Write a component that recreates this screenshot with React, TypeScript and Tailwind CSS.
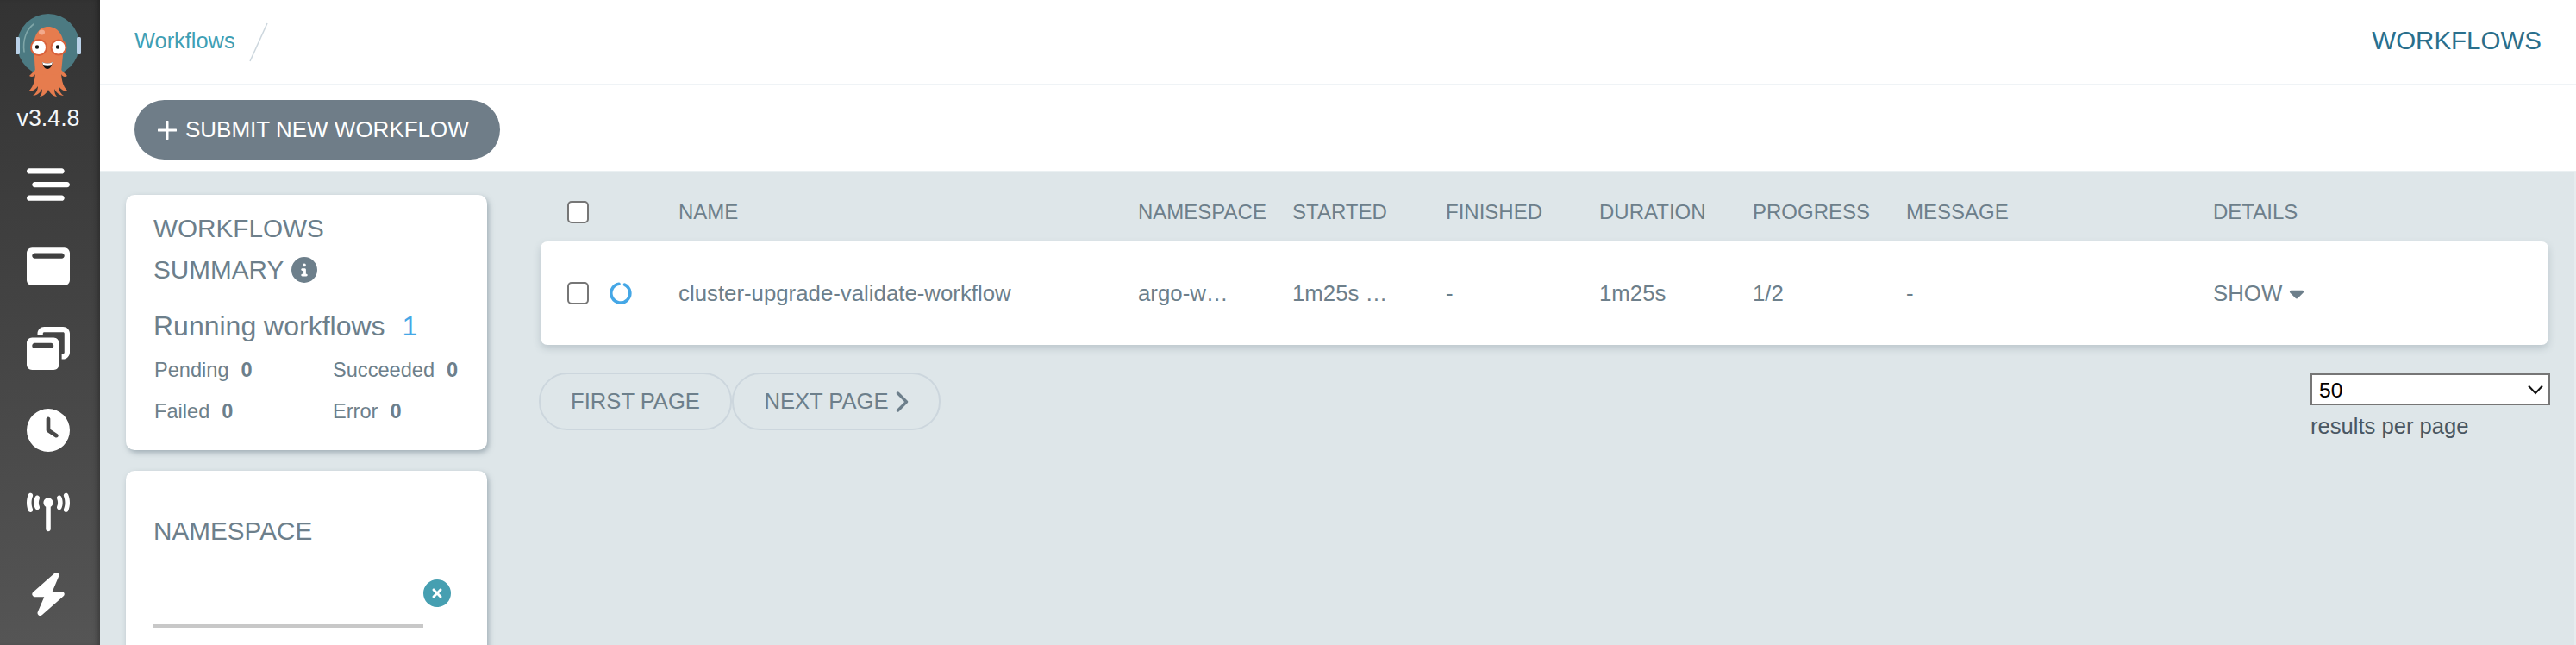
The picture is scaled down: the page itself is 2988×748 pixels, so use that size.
import {
  FaBarsStaggered,
  FaBolt,
  FaCaretDown,
  FaCircleInfo,
  FaCircleXmark,
  FaClock,
  FaTowerBroadcast,
  FaWindowMaximize,
  FaWindowRestore,
} from 'react-icons/fa6';

function ArgoLogo() {
  return (
    <svg viewBox="16 14 80 100" className="h-[100px] w-[80px]">
      {/* helmet */}
      <circle cx="56" cy="52" r="36" fill="#4c7a82" />
      <rect x="18" y="43" width="5" height="20" rx="1.5" fill="#b9d1e8" />
      <rect x="89" y="43" width="5" height="20" rx="1.5" fill="#b9d1e8" />
      <path d="M28 60C26 46 31 34 39 28" fill="none" stroke="#7fa6a8" strokeWidth="1.6" strokeLinecap="round" />
      {/* tentacles */}
      <path
        d="M41 80C41 90 40 100 33 106C38 106 42 103 44 100C44 105 41 109 38 111C43 111 47 107 49 103C49 107 48 110 46 112C50 112 54 108 56 104C58 108 62 112 66 112C64 110 63 107 63 103C65 107 69 111 74 111C71 109 68 105 68 100C70 103 74 106 79 106C72 100 71 90 71 80Z"
        fill="#e67c4e"
      />
      <path d="M34 88C37 90 40 89 42 84L42 80Z M78 88C75 90 72 89 70 84L70 80Z" fill="#e67c4e" />
      {/* head */}
      <path d="M56 31C45 31 39 41 39 54L41 84C46 88 66 88 71 84L74 54C74 41 67 31 56 31Z" fill="#e67c4e" />
      <ellipse cx="48.5" cy="37.5" rx="3.5" ry="3" fill="#f2a98c" />
      {/* eyes */}
      <circle cx="45" cy="55" r="10" fill="#d9603a" />
      <circle cx="45" cy="55" r="8" fill="#fff" />
      <circle cx="43" cy="54.5" r="2.2" fill="#111" />
      <circle cx="68" cy="55" r="9.5" fill="#d9603a" />
      <circle cx="68" cy="55" r="7.5" fill="#fff" />
      <circle cx="67" cy="54.5" r="2.2" fill="#111" />
      {/* mouth */}
      <path d="M49 72C53 74 57 74 61 72C60 77 58 80 55 80C52 80 50 77 49 72Z" fill="#111" />
      <path d="M49 72C53 74 57 74 61 72L60 75C57 76 53 76 50 75Z" fill="#fff" />
    </svg>
  );
}

const navIcons = [FaBarsStaggered, FaWindowMaximize, FaWindowRestore, FaClock, FaTowerBroadcast, FaBolt];

function Sidebar() {
  return (
    <nav className="flex h-full w-[116px] shrink-0 flex-col items-center bg-linear-to-b from-[#333333] to-[#555555] shadow-[inset_-6px_0_6px_-3px_rgba(0,0,0,0.28)]">
      <div className="flex h-[166px] w-full flex-col items-center pt-[14px] pr-[4px]">
        <ArgoLogo />
        <span className="mt-[8px] text-[26.8px] leading-[30px] text-[#f4f6f7]">v3.4.8</span>
      </div>
      {navIcons.map((Icon, i) => (
        <div key={i} className="flex h-[95px] w-full items-center justify-center pr-[4px] text-white">
          <Icon size={50} />
        </div>
      ))}
    </nav>
  );
}

function Checkbox() {
  return <span className="block h-[26px] w-[25px] rounded-[5px] border-2 border-[#767676] bg-white" />;
}

function RunningIcon() {
  return (
    <svg width="26" height="26" viewBox="0 0 26 26">
      <path d="M17.5 3.1A11 11 0 1 1 11 2.2" fill="none" stroke="#45a7e6" strokeWidth="3.6" strokeLinecap="round" />
    </svg>
  );
}

function SummaryStat({ label }: { label: string }) {
  return (
    <div className="flex items-center">
      <span>{label}</span>
      <b className="ml-[14px] font-bold">0</b>
    </div>
  );
}

function FiltersColumn() {
  return (
    <aside className="ml-[30px] flex w-[419px] shrink-0 flex-col gap-[24px] pt-[26px]">
      <section className="h-[296px] rounded-[10px] bg-white px-[32px] pt-[15px] shadow-[2px_3px_6px_rgba(109,127,139,0.55)]">
        <h3 className="text-[29.7px] leading-[48px]">WORKFLOWS</h3>
        <h3 className="flex items-center text-[29.7px] leading-[48px]">
          SUMMARY
          <FaCircleInfo size={30} className="ml-[9px]" />
        </h3>
        <div className="mt-[17px] flex items-center text-[32px] leading-[48px]">
          Running workflows
          <span className="ml-[20px] font-medium text-[#45a7e6]">1</span>
        </div>
        <div className="ml-[1px] mt-[3px] grid grid-cols-[207px_1fr] text-[23.6px] leading-[48px]">
          <SummaryStat label="Pending" />
          <SummaryStat label="Succeeded" />
          <SummaryStat label="Failed" />
          <SummaryStat label="Error" />
        </div>
      </section>
      <section className="h-[300px] rounded-[10px] bg-white px-[32px] pt-[48px] shadow-[2px_3px_6px_rgba(109,127,139,0.55)]">
        <h3 className="text-[29.7px] leading-[44px]">NAMESPACE</h3>
        <div className="mt-[38px] flex items-start">
          <div className="mt-[48px] h-[4px] w-[313px] bg-[#c8c8c8]" />
          <FaCircleXmark size={32} className="-mt-[4px] text-[#469fb1]" />
        </div>
      </section>
    </aside>
  );
}

const headers = ['NAME', 'NAMESPACE', 'STARTED', 'FINISHED', 'DURATION', 'PROGRESS', 'MESSAGE', 'DETAILS'];
const gridCols = 'grid grid-cols-[160px_533px_179px_178px_178px_178px_178px_356px_1fr] items-center';

function WorkflowsTable() {
  return (
    <div className="ml-[62px] mr-[30px] flex-1">
      <div className={`${gridCols} h-[80px] pt-[11px] text-[24px]`}>
        <div className="pl-[31px]">
          <Checkbox />
        </div>
        {headers.map((h) => (
          <div key={h}>{h}</div>
        ))}
      </div>

      <div className={`${gridCols} h-[120px] rounded-[8px] bg-white text-[25.8px] shadow-[0_4px_8px_rgba(109,127,139,0.3)]`}>
        <div className="flex items-center gap-[24px] pl-[31px]">
          <Checkbox />
          <RunningIcon />
        </div>
        <div>cluster-upgrade-validate-workflow</div>
        <div>argo-w…</div>
        <div>1m25s …</div>
        <div>-</div>
        <div>1m25s</div>
        <div>1/2</div>
        <div>-</div>
        <div className="flex items-center">
          SHOW
          <FaCaretDown size={26} className="ml-[4px]" />
        </div>
      </div>

      <div className="mt-[32px] flex items-start justify-between">
        <div className="ml-[-2px] flex">
          <button className="h-[67px] w-[224px] rounded-[33px] border-2 border-[#ccd6dd] text-[25.6px] text-[#6d7f8b]">FIRST PAGE</button>
          <button className="flex h-[67px] w-[242px] items-center justify-center rounded-[33px] border-2 border-[#ccd6dd] text-[25.6px] text-[#6d7f8b]">
            NEXT PAGE
            <svg width="15" height="24" viewBox="0 0 15 24" className="ml-[8px]">
              <path d="M2.5 2L12.5 12L2.5 22" fill="none" stroke="#6d7f8b" strokeWidth="3.4" strokeLinecap="round" strokeLinejoin="round" />
            </svg>
          </button>
        </div>
        <div className="mr-[-2px] mt-[1px] w-[278px]">
          <div className="relative">
            <select className="block h-[37px] w-full appearance-none border-2 border-[#767676] bg-white pl-[8px] text-[24.6px] text-black">
              <option>50</option>
            </select>
            <svg width="18" height="12" viewBox="0 0 18 12" className="absolute right-[8px] top-[13px]">
              <path d="M1 1.5L9 10L17 1.5" fill="none" stroke="#111" strokeWidth="2" />
            </svg>
          </div>
          <div className="mt-[9px] text-[25.6px] leading-[30px] text-[#495763]">results per page</div>
        </div>
      </div>
    </div>
  );
}

export default function App() {
  return (
    <div className="flex h-[748px] w-[2988px] overflow-hidden bg-white font-['Liberation_Sans',Arial,sans-serif] text-[#6d7f8b]">
      <Sidebar />
      <main className="flex min-w-0 flex-1 flex-col">
        <header className="flex h-[99px] shrink-0 items-center justify-between border-b-2 border-[#eff3f6] pl-[40px] pr-[40px]">
          <div className="flex items-center">
            <a className="mb-[3px] text-[25.4px] text-[#3f9fb5]">Workflows</a>
            <svg width="22" height="46" className="ml-[16px]">
              <path d="M1 45L21 1" stroke="#ccd6dd" strokeWidth="1.5" fill="none" />
            </svg>
          </div>
          <h1 className="mb-[3px] text-[29.5px] text-[#2a6f8c]">WORKFLOWS</h1>
        </header>
        <div className="flex h-[101px] shrink-0 items-start border-b-2 border-[#eaf0f2] pl-[40px] pt-[17px]">
          <button className="flex h-[69px] w-[424px] items-center rounded-[35px] bg-[#6f7d88] pl-[27px] text-[26px] text-white">
            <svg width="22" height="22" viewBox="0 0 22 22" className="mr-[10px]">
              <path d="M11 1V21M1 11H21" fill="none" stroke="#fff" strokeWidth="3" strokeLinecap="round" />
            </svg>
            SUBMIT NEW WORKFLOW
          </button>
        </div>
        <div className="flex min-h-0 flex-1 items-start overflow-hidden border-r-2 border-[#e6ecee] bg-[#dee6e9]">
          <FiltersColumn />
          <WorkflowsTable />
        </div>
      </main>
    </div>
  );
}
